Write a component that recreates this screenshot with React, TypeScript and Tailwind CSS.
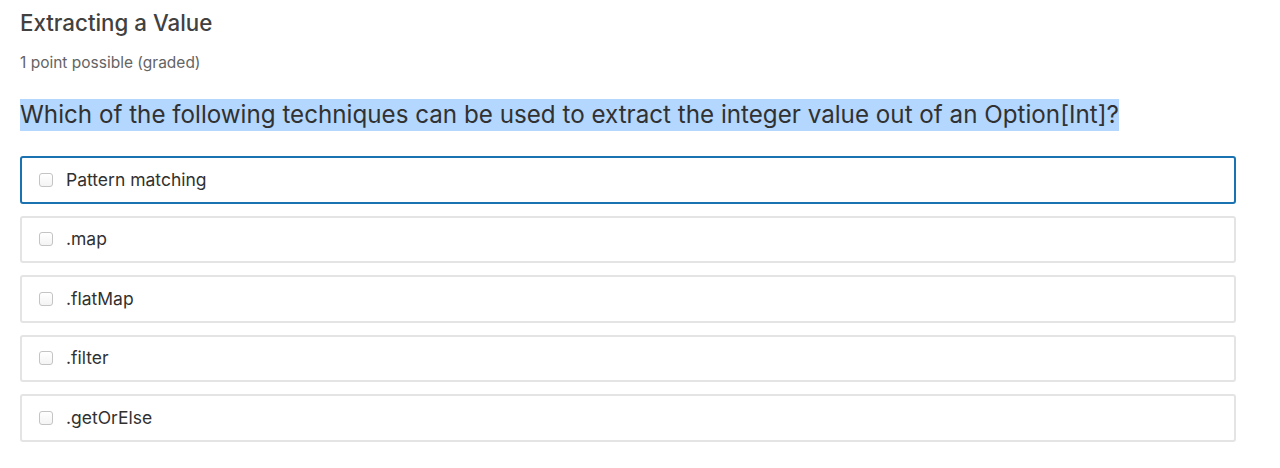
import React from 'react';

const options = ['Pattern matching', '.map', '.flatMap', '.filter', '.getOrElse'];

export default function App() {
    return (
        <div className="min-h-screen w-full bg-white pl-5 pr-[44px] pt-[9px]" style={{ fontFamily: 'Inter, "Open Sans", sans-serif' }}>
            <h2 className="text-[22.3px] font-medium leading-[28px] text-[#414141]">Extracting a Value</h2>
            <div className="mt-[16px] text-[15.5px] leading-[20px] text-[#646464]">1 point possible (graded)</div>
            <p className="mt-[26px] text-[24.2px] leading-[32px] text-[#313131]">
                <span className="inline-block bg-[#b3d7fe] leading-[32px]">Which of the following techniques can be used to extract the integer value out of an Option[Int]?</span>
            </p>
            <div className="mt-[25px] flex flex-col gap-[12px]">
                {options.map((opt, i) => (
                    <label
                        key={opt}
                        className={
                            i === 0
                                ? 'flex h-[47.5px] items-center rounded-[3px] border-2 border-[#1a73b0] pl-[17px] text-[17.5px] text-[#313131]'
                                : 'flex h-[47.5px] items-center rounded-[3px] border-2 border-[#e4e4e4] pl-[17px] text-[17.5px] text-[#313131]'
                        }
                    >
                        <span className="mr-[13px] h-[14px] w-[14px] rounded-[3px] border border-[#c4c4c4] bg-gradient-to-b from-white to-[#f4f4f4]" />
                        {opt}
                    </label>
                ))}
            </div>
        </div>
    );
}
